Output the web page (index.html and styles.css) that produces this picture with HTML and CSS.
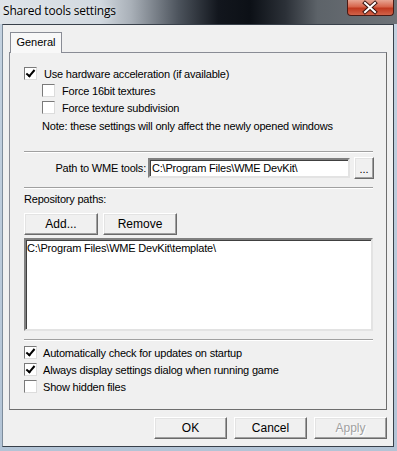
FILE: index.html
```html
<!DOCTYPE html>
<html lang="en">
<head>
    <meta charset="UTF-8">
    <title>Shared tools settings</title>
    <link rel="stylesheet" href="styles.css">
</head>
<body>
    <div class="window">
        <div class="titlebar">
            <span class="title">Shared tools settings</span>
            <div class="close">
                <svg width="46" height="16" viewBox="0 0 46 16">
                    <path d="M18 3 L28 12 M28 3 L18 12" stroke="#3a1510" stroke-width="4" stroke-linecap="square"/>
                    <path d="M18 3 L28 12 M28 3 L18 12" stroke="#ffffff" stroke-width="2" stroke-linecap="square"/>
                </svg>
            </div>
        </div>

        <div class="client">
            <div class="tabs">
                <div class="tab">General</div>
            </div>

            <div class="pane">
                <div class="check-row">
                    <span class="box checked"></span>
                    <span>Use hardware acceleration (if available)</span>
                </div>
                <div class="check-row indent">
                    <span class="box"></span>
                    <span>Force 16bit textures</span>
                </div>
                <div class="check-row indent">
                    <span class="box"></span>
                    <span>Force texture subdivision</span>
                </div>
                <div class="note">Note: these settings will only affect the newly opened windows</div>

                <div class="sep first-sep"></div>

                <div class="path-row">
                    <label class="path-label">Path to WME tools:</label>
                    <div class="input">C:\Program Files\WME DevKit\</div>
                    <div class="btn small">...</div>
                </div>

                <div class="sep"></div>

                <div class="repo-label">Repository paths:</div>
                <div class="repo-buttons">
                    <div class="btn">Add...</div>
                    <div class="btn">Remove</div>
                </div>
                <div class="list">
                    <div class="list-item">C:\Program Files\WME DevKit\template\</div>
                </div>

                <div class="sep"></div>

                <div class="bottom-checks">
                    <div class="check-row">
                        <span class="box checked"></span>
                        <span>Automatically check for updates on startup</span>
                    </div>
                    <div class="check-row">
                        <span class="box checked"></span>
                        <span>Always display settings dialog when running game</span>
                    </div>
                    <div class="check-row">
                        <span class="box"></span>
                        <span>Show hidden files</span>
                    </div>
                </div>
            </div>

            <div class="dialog-buttons">
                <div class="btn">OK</div>
                <div class="btn">Cancel</div>
                <div class="btn disabled">Apply</div>
            </div>
        </div>
    </div>
</body>
</html>
```

FILE: styles.css
```css
html, body {
    margin: 0;
    padding: 0;
}
body {
    width: 397px;
    height: 451px;
    overflow: hidden;
    font-family: 'Liberation Sans', Arial, sans-serif;
    font-size: 11px;
    letter-spacing: -0.2px;
    color: #000;
    background-color: #b8c8d8;
}
.window {
    width: 397px;
    height: 451px;
    background: linear-gradient(180deg, #c4d2e0 0%, #b3c4d6 100%);
}

/* title bar */
.titlebar {
    position: relative;
    height: 24px;
    background: linear-gradient(90deg, #dfe4e9 0%, #d2d9e0 25%, #a9b0b8 33%, #4c535c 45%, #12161d 55%, #0c1016 63%, #2c3138 72%, #5d6369 80%, #6e7378 100%);
}
.title {
    display: block;
    padding: 3px 0 0 3px;
    font-family: 'Open Sans', 'Liberation Sans', sans-serif;
    font-size: 12px;
    line-height: 15px;
    letter-spacing: -0.2px;
    color: #000;
    text-shadow: 0 0 5px rgba(255,255,255,0.7);
}
.close {
    position: absolute;
    top: 0;
    left: 347px;
    width: 45px;
    height: 15px;
    border: 1px solid #4a1a14;
    border-top: none;
    border-radius: 0 0 4px 4px;
    background: linear-gradient(180deg, #e8a593 0%, #d7654c 45%, #c0391f 55%, #d1634a 100%);
    overflow: hidden;
}
.close svg {
    display: block;
    margin-left: -1px;
}

/* client area */
.client {
    width: 390px;
    height: 421px;
    margin-left: 2px;
    border: 1px solid #38404a;
    border-left-color: #7d8c9b;
    background-color: #f0f0f0;
}
.tabs {
    display: flex;
    height: 20px;
    padding: 7px 0 0 7px;
}
.tab {
    width: 50px;
    height: 20px;
    border: 1px solid #898c95;
    border-bottom: none;
    background-color: #f8f8f8;
    line-height: 19px;
    text-align: center;
    position: relative;
    z-index: 1;
    letter-spacing: 0;
}
.pane {
    width: 376px;
    height: 356px;
    margin-left: 6px;
    border: 1px solid #898c95;
    border-right-color: #6d6d6d;
    border-bottom-color: #6d6d6d;
    background-color: #f0f0f0;
}
.pane > .check-row:first-child {
    margin-top: 12px;
}
.check-row {
    display: flex;
    align-items: center;
    height: 17px;
    padding-left: 14px;
}
.check-row.indent {
    padding-left: 32px;
}
.box {
    width: 11px;
    height: 11px;
    margin-right: 7px;
    border: 1px solid;
    border-color: #7a7a7a #dcdcdc #dcdcdc #7a7a7a;
    background-color: #fff;
    position: relative;
}
.box.checked::after {
    content: "";
    position: absolute;
    left: 3px;
    top: 0px;
    width: 3px;
    height: 7px;
    border: solid #000;
    border-width: 0 2px 2px 0;
    transform: rotate(40deg);
}
.note {
    height: 17px;
    line-height: 17px;
    margin-top: 2px;
    padding-left: 32px;
}

.sep {
    height: 0;
    margin: 8px 13px 0 14px;
    border-top: 1px solid #a0a0a0;
    border-bottom: 1px solid #fff;
}
.first-sep {
    margin-top: 16px;
}

.path-row {
    display: flex;
    align-items: center;
    margin-top: 4px;
    padding-left: 14px;
    height: 22px;
}
.path-label {
    width: 122px;
    padding-right: 2px;
    text-align: right;
}
.input {
    width: 196px;
    height: 16px;
    padding: 0 0 0 2px;
    line-height: 16px;
    border: 2px solid;
    border-color: #808080 #e3e3e3 #e3e3e3 #808080;
    box-shadow: inset 1px 1px 0 #404040;
    background-color: #fff;
    margin-right: 4px;
    white-space: nowrap;
    overflow: hidden;
}

.btn {
    box-sizing: border-box;
    width: 74px;
    height: 22px;
    border: 1px solid;
    border-color: #ffffff #6a6a6a #6a6a6a #ffffff;
    box-shadow: inset -1px -1px 0 #a0a0a0, inset 1px 1px 0 #e3e3e3;
    background-color: #f0f0f0;
    text-align: center;
    line-height: 20px;
    font-size: 12px;
    letter-spacing: 0;
}
.btn.small {
    width: 20px;
    font-size: 11px;
    line-height: 22px;
}
.btn.disabled {
    color: #a0a0a0;
    text-shadow: 1px 1px 0 #fff;
}

.repo-label {
    margin-top: 3px;
    padding-left: 14px;
    height: 14px;
    line-height: 14px;
}
.repo-buttons {
    display: flex;
    gap: 5px;
    margin-top: 7px;
    padding-left: 14px;
}
.list {
    box-sizing: border-box;
    width: 349px;
    height: 93px;
    margin: 3px 0 0 14px;
    border: 2px solid;
    border-color: #808080 #e3e3e3 #e3e3e3 #808080;
    box-shadow: inset 1px 1px 0 #404040;
    background-color: #fff;
    padding: 2px 1px;
}
.list-item {
    line-height: 13px;
}

.bottom-checks {
    margin-top: 3px;
}
.bottom-checks .box {
    margin-right: 6px;
}

.dialog-buttons {
    display: flex;
    justify-content: flex-end;
    gap: 7px;
    margin-top: 7px;
    padding-right: 6px;
}
.dialog-buttons .btn {
    width: 73px;
}
```
